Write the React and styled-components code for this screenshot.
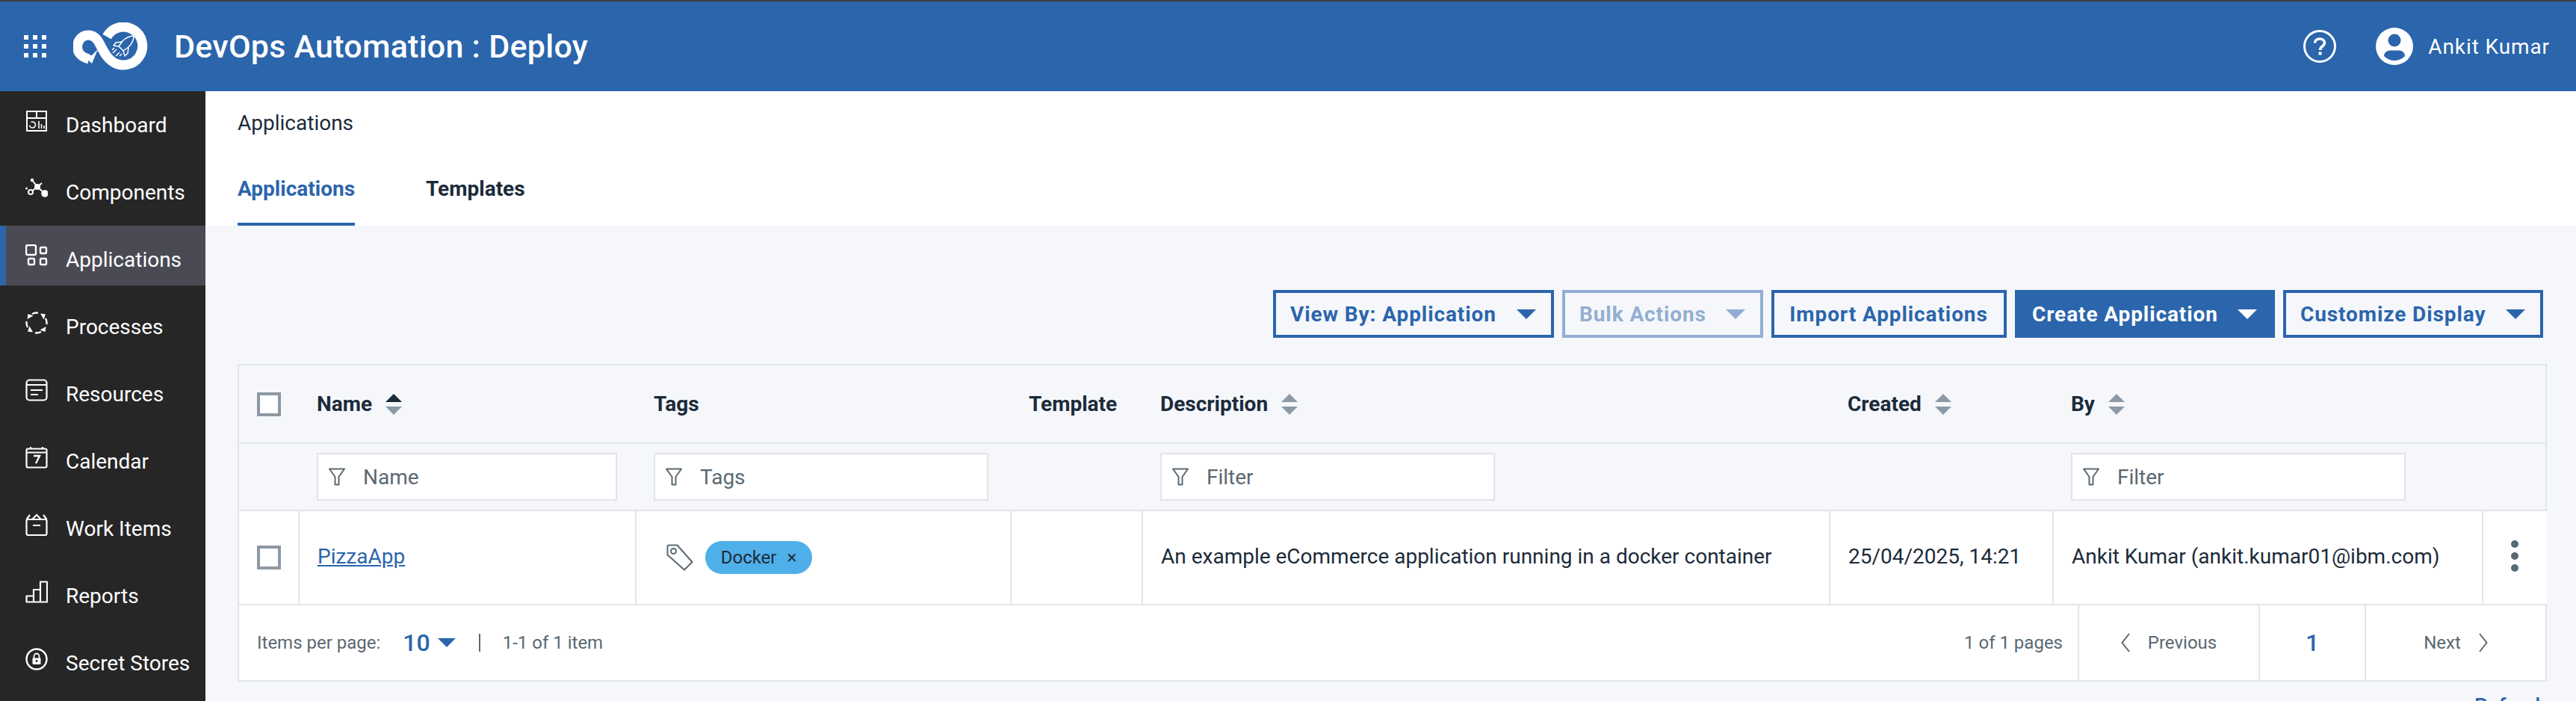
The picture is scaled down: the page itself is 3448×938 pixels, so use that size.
import React from 'react';
import styled, { createGlobalStyle } from 'styled-components';

const BLUE = '#2b65ac';
const LINE = '#e1e4ea';

const GlobalStyle = createGlobalStyle`
  html, body { margin: 0; padding: 0; height: 100%; overflow: hidden; }
  body { font-family: Roboto, "Liberation Sans", sans-serif; background: #f5f7fb; color: #1c2b3a; }
  * { box-sizing: border-box; }
`;

const Page = styled.div`
  height: 938px;
  overflow: hidden;
  display: flex;
  flex-direction: column;
  border-top: 2px solid #3f3f3f;
`;

const Header = styled.header`
  height: 120px;
  flex: none;
  background: ${BLUE};
  color: #fff;
  display: flex;
  align-items: center;
  padding: 0 35px 0 32px;
`;

const Dots = styled.div`
  display: grid;
  grid-template-columns: repeat(3, 6px);
  grid-auto-rows: 6px;
  gap: 6px;
  margin-right: 36px;
  span { background: #fff; }
`;

const Title = styled.h1`
  margin: 0 0 0 35px;
  font-size: 43px;
  font-weight: 500;
  letter-spacing: 0.25px;
`;

const HeaderRight = styled.div`
  margin-left: auto;
  display: flex;
  align-items: center;
`;

const HeaderGap = styled.span`
  width: 52px;
`;

const UserName = styled.span`
  font-size: 28px;
  letter-spacing: 0.9px;
  margin-left: 20px;
`;

const Body = styled.div`
  flex: 1;
  display: flex;
  min-height: 0;
`;

const Sidebar = styled.nav`
  width: 275px;
  flex: none;
  background: #262626;
  display: flex;
  flex-direction: column;
  gap: 10px;
`;

const NavItem = styled.a`
  height: 80px;
  flex: none;
  display: flex;
  align-items: center;
  gap: 24px;
  padding: 10px 0 0 ${(p) => (p.$active ? '26px' : '34px')};
  color: #fff;
  font-size: 28px;
  background: ${(p) => (p.$active ? '#4a4a55' : 'transparent')};
  border-left: ${(p) => (p.$active ? `8px solid ${BLUE}` : 'none')};
  svg { margin-top: -10px; flex: none; }
`;

const Main = styled.main`
  flex: 1;
  min-width: 0;
  display: flex;
  flex-direction: column;
`;

const TopPanel = styled.div`
  background: #fff;
  height: 180px;
  flex: none;
  padding: 26px 0 0 43px;
`;

const Breadcrumb = styled.div`
  font-size: 28px;
  line-height: 34px;
  color: #1c2b3a;
`;

const Tabs = styled.div`
  display: flex;
  gap: 95px;
  margin-top: 36px;
`;

const Tab = styled.div`
  font-size: 28px;
  font-weight: 700;
  height: 84px;
  padding-top: 18px;
  color: ${(p) => (p.$active ? BLUE : '#1c2b3a')};
  border-bottom: 4px solid ${(p) => (p.$active ? BLUE : 'transparent')};
`;

const Content = styled.div`
  padding: 86px 39px 0 43px;
`;

const Toolbar = styled.div`
  display: flex;
  justify-content: flex-end;
  gap: 11px;
  padding-right: 5px;
`;

const ActionButton = styled.button`
  height: 64px;
  width: ${(p) => p.$w}px;
  padding: 0 20px 0 19px;
  display: flex;
  align-items: center;
  justify-content: ${(p) => (p.$center ? 'center' : 'space-between')};
  font: 700 28px Roboto, sans-serif;
  letter-spacing: 0.9px;
  border: 4px solid ${(p) => (p.$disabled ? '#93aed2' : BLUE)};
  background: ${(p) => (p.$primary ? BLUE : 'transparent')};
  color: ${(p) => (p.$primary ? '#fff' : p.$disabled ? '#93aed2' : BLUE)};
  white-space: nowrap;
`;

const Caret = styled.i`
  display: block;
  width: 0;
  height: 0;
  border-left: ${(p) => p.$size || 13}px solid transparent;
  border-right: ${(p) => p.$size || 13}px solid transparent;
  border-top: ${(p) => p.$size || 13}px solid currentColor;
`;

const Card = styled.div`
  margin-top: 35px;
  border: 2px solid ${LINE};
`;

const Table = styled.table`
  width: 100%;
  table-layout: fixed;
  border-collapse: collapse;
`;

const HeadCell = styled.th`
  height: 104px;
  padding: 0 0 0 24px;
  text-align: left;
  font-size: 28px;
  font-weight: 700;
  color: #1c2b3a;
  border-bottom: 2px solid ${LINE};
`;

const HeadLabel = styled.div`
  display: flex;
  align-items: center;
  gap: 18px;
`;

const FilterCell = styled.td`
  height: 90px;
  padding: 0 0 0 24px;
  border-bottom: 2px solid ${LINE};
`;

const FilterBox = styled.div`
  width: ${(p) => p.$w}px;
  height: 64px;
  background: #fff;
  border: 2px solid ${LINE};
  display: flex;
  align-items: center;
  gap: 24px;
  padding-left: 14px;
  font-size: 28px;
  color: #5a6872;
`;

const DataCell = styled.td`
  height: 126px;
  padding: 0 0 ${(p) => (p.$flat ? 0 : 4)}px ${(p) => (p.$bare ? 0 : 24)}px;
  background: #fff;
  font-size: 28px;
  color: #1c2b3a;
  white-space: nowrap;
  border-left: ${(p) => (p.$first ? 'none' : `2px solid ${LINE}`)};
  border-bottom: 2px solid ${LINE};
`;

const NameLink = styled.a`
  color: ${BLUE};
  text-decoration: underline;
`;

const Checkbox = styled.span`
  display: block;
  width: 32px;
  height: 32px;
  background: #fff;
  border: 4px solid #8d98a3;
`;

const TagRow = styled.div`
  display: flex;
  align-items: center;
  gap: 16px;
  padding-left: 16px;
`;

const Chip = styled.span`
  height: 44px;
  width: 143px;
  border-radius: 22px;
  background: #4fafe9;
  font-size: 24px;
  display: flex;
  align-items: center;
  justify-content: center;
  gap: 14px;
  color: #1c2b3a;
`;

const Kebab = styled.div`
  display: flex;
  flex-direction: column;
  align-items: center;
  gap: 6px;
  padding-right: 2px;
  span { width: 10px; height: 10px; border-radius: 50%; background: #5a6872; }
`;

const Pagination = styled.div`
  height: 100px;
  background: #fff;
  display: flex;
  align-items: stretch;
  font-size: 24px;
  color: #5a6872;
`;

const PagerLeft = styled.div`
  display: flex;
  align-items: center;
  padding-left: 24px;
`;

const PerPage = styled.span`
  display: flex;
  align-items: center;
  gap: 10px;
  margin-left: 30px;
  color: ${BLUE};
  font-size: 32px;
  font-weight: 500;
  padding-right: 31px;
`;

const Divider = styled.i`
  width: 2px;
  height: 24px;
  background: #5a6872;
  margin-right: 30px;
`;

const PageCount = styled.div`
  margin-left: auto;
  display: flex;
  align-items: center;
  padding-right: 20px;
`;

const PagerCell = styled.div`
  width: ${(p) => p.$w}px;
  display: flex;
  align-items: center;
  justify-content: center;
  gap: 24px;
  border-left: 2px solid ${LINE};
  color: ${(p) => (p.$current ? BLUE : '#5a6872')};
  font-size: ${(p) => (p.$current ? '32px' : '24px')};
  font-weight: ${(p) => (p.$current ? 500 : 400)};
`;

const Refresh = styled.div`
  margin-top: 16px;
  text-align: right;
  font-size: 28px;
  color: ${BLUE};
  font-weight: 500;
`;

const Logo = () => (
  <svg width="100" height="64" viewBox="0 0 100 64" fill="none">
    <path d="M45 19A25.5 25.5 0 1 1 52 52C44 47 40 37 35 28C31 20 26 17 20 17C11 17 5.5 25 5.5 33C5.5 41 12 47 21 49" stroke="#fff" strokeWidth="13" />
    <path d="M13 43L25 55L33 36L25 44Z" fill="#fff" />
    <g stroke="#fff" strokeWidth="1.5" strokeLinejoin="round">
      <path d="M81 18C75 18 70 21 66 25L61 32L67 38L74 33C78 29 81 24 81 18Z" />
      <path d="M65 26L57 27L54 31L61 32M74 33L73 41L69 45L67 38" />
      <path d="M58 36L53 41M62 40L57 45M55 34L52 37M65 42L62 45" />
    </g>
  </svg>
);

const HelpIcon = () => (
  <svg width="46" height="46" viewBox="0 0 46 46" fill="none">
    <circle cx="23" cy="23" r="20.5" stroke="#fff" strokeWidth="3" />
    <path d="M16.5 18.5C16.5 15 19.5 13 23 13C26.5 13 29.5 15 29.5 18.5C29.5 23 23.5 22.5 23.5 28" stroke="#fff" strokeWidth="3.6" />
    <rect x="21.5" y="30.5" width="4" height="4" fill="#fff" />
  </svg>
);

const UserIcon = () => (
  <svg width="50" height="50" viewBox="0 0 50 50">
    <circle cx="25" cy="25" r="25" fill="#fff" />
    <circle cx="25" cy="17" r="8.5" fill={BLUE} />
    <path d="M11 38C11 33.5 15 30.5 19 30.5H31C35 30.5 39 33.5 39 38C35 42 30 44 25 44C20 44 15 42 11 38Z" fill={BLUE} />
  </svg>
);

const NavSvg = ({ children }) => (
  <svg width="30" height="30" viewBox="0 0 30 30" fill="none" stroke="#fff" strokeWidth="2">
    {children}
  </svg>
);

const navIcons = {
  Dashboard: (
    <NavSvg>
      <rect x="2" y="2" width="26" height="26" />
      <path d="M2 11H28M15 2V11" />
      <path d="M7.5 16.5A4 4 0 1 1 5.5 20.5" strokeWidth="1.6" />
      <path d="M18 15V25M21.5 19V25M25 21V25" strokeWidth="1.6" />
    </NavSvg>
  ),
  Components: (
    <NavSvg>
      <path d="M7 20L16 13L26 22M9 4L16 13L22 8" />
      <circle cx="16" cy="13" r="3" fill="#fff" />
      <circle cx="7" cy="20" r="3" fill="#262626" />
      <circle cx="26" cy="22" r="3.8" fill="#fff" />
      <circle cx="9" cy="4" r="2.2" fill="#fff" stroke="none" />
      <circle cx="1.5" cy="15" r="1.5" fill="#fff" stroke="none" />
    </NavSvg>
  ),
  Applications: (
    <NavSvg>
      <rect x="1" y="1" width="13" height="13" rx="2" strokeWidth="2.4" />
      <rect x="20" y="4" width="8" height="8" rx="1.5" strokeWidth="2.4" />
      <rect x="4" y="19" width="8" height="8" rx="1.5" strokeWidth="2.4" />
      <rect x="20" y="19" width="8" height="8" rx="1.5" strokeWidth="2.4" />
    </NavSvg>
  ),
  Processes: (
    <NavSvg>
      {[0, 90, 180, 270].map((deg) => (
        <g key={deg} transform={`rotate(${deg} 15 15)`}>
          <path d="M17 1.6A13.5 13.5 0 0 0 9 3" strokeWidth="2.4" />
          <path d="M2.5 10L3.5 3L10.5 5.5Z" fill="#fff" stroke="none" />
        </g>
      ))}
    </NavSvg>
  ),
  Resources: (
    <NavSvg>
      <rect x="1.5" y="1.5" width="27" height="27" rx="4" strokeWidth="2.2" />
      <path d="M1.5 8H28.5M7 15H23M7 21H17" strokeWidth="2.2" />
    </NavSvg>
  ),
  Calendar: (
    <NavSvg>
      <rect x="1.5" y="3.5" width="27" height="25" rx="2" strokeWidth="2.2" />
      <path d="M1.5 8.5H28.5M7 1V4M23 1V4" strokeWidth="2.2" />
      <path d="M11 13H19L14 23" strokeWidth="2.4" />
    </NavSvg>
  ),
  'Work Items': (
    <NavSvg>
      <rect x="1.5" y="8" width="27" height="21" rx="2" strokeWidth="2.2" />
      <path d="M1.5 8L6 2M28.5 8L24 2M9 8L15 2L21 8M10 16H20" strokeWidth="2.2" />
    </NavSvg>
  ),
  Reports: (
    <NavSvg>
      <path d="M1.5 28.5V20.5H11V28.5ZM11 28.5V12H20V28.5ZM20 28.5V1.5H29V28.5H1.5" strokeWidth="2.2" strokeLinejoin="round" />
    </NavSvg>
  ),
  'Secret Stores': (
    <NavSvg>
      <circle cx="15" cy="15" r="13.5" strokeWidth="2.4" />
      <rect x="9.5" y="13.5" width="11" height="8.5" fill="#fff" stroke="none" rx="1" />
      <path d="M11.5 14V11A3.5 3.5 0 0 1 18.5 11V14" strokeWidth="1.8" />
      <circle cx="15" cy="17.5" r="1.4" fill="#262626" stroke="none" />
    </NavSvg>
  ),
};

const FunnelIcon = () => (
  <svg width="22" height="24" viewBox="0 0 22 24" fill="none" stroke="#5a6872" strokeWidth="2" strokeLinejoin="round">
    <path d="M1 1.5H21L13.5 12V22.5H8.5V12Z" />
  </svg>
);

const TagIcon = () => (
  <svg width="36" height="36" viewBox="0 0 36 36" fill="none" stroke="#5a6872" strokeWidth="2" strokeLinejoin="round">
    <path d="M1.5 3C1.5 2 2.5 1.5 3.5 1.5H14.5L34.5 24L24 34.5L1.5 14.5Z" />
    <circle cx="9.5" cy="9.5" r="3.5" />
  </svg>
);

const Chevron = ({ dir }) => (
  <svg width="12" height="26" viewBox="0 0 12 26" fill="none" stroke="#5a6872" strokeWidth="2">
    <path d={dir === 'left' ? 'M11 1L1.5 13L11 25' : 'M1 1L10.5 13L1 25'} />
  </svg>
);

const SortIcon = ({ up }) => (
  <svg width="22" height="30" viewBox="0 0 22 30">
    <path d="M11 1L22 12H0Z" fill={up ? '#1c2b3a' : '#8d9aa6'} />
    <path d="M11 29L22 18H0Z" fill="#8d9aa6" />
  </svg>
);

const navLabels = ['Dashboard', 'Components', 'Applications', 'Processes', 'Resources', 'Calendar', 'Work Items', 'Reports', 'Secret Stores'];
const buttons = [
  { label: 'View By: Application', caret: true, width: 376 },
  { label: 'Bulk Actions', caret: true, disabled: true, width: 269 },
  { label: 'Import Applications', width: 315 },
  { label: 'Create Application', caret: true, primary: true, width: 348 },
  { label: 'Customize Display', caret: true, width: 348 },
];

export default function App() {
  return (
    <>
      <GlobalStyle />
      <Page>
        <Header>
          <Dots>{Array.from({ length: 9 }).map((_, i) => <span key={i} />)}</Dots>
          <Logo />
          <Title>DevOps Automation : Deploy</Title>
          <HeaderRight>
            <HelpIcon />
            <HeaderGap />
            <UserIcon />
            <UserName>Ankit Kumar</UserName>
          </HeaderRight>
        </Header>
        <Body>
          <Sidebar>
            {navLabels.map((label) => (
              <NavItem key={label} $active={label === 'Applications'}>
                {navIcons[label]}
                {label}
              </NavItem>
            ))}
          </Sidebar>
          <Main>
            <TopPanel>
              <Breadcrumb>Applications</Breadcrumb>
              <Tabs>
                <Tab $active>Applications</Tab>
                <Tab>Templates</Tab>
              </Tabs>
            </TopPanel>
            <Content>
              <Toolbar>
                {buttons.map((b) => (
                  <ActionButton key={b.label} $w={b.width} $center={!b.caret} $primary={b.primary} $disabled={b.disabled}>
                    {b.label}
                    {b.caret && <Caret />}
                  </ActionButton>
                ))}
              </Toolbar>
              <Card>
                <Table>
                  <colgroup>
                    {[80, 451, 502, 176, 920, 299, 575, 86].map((w, i) => <col key={i} width={w} />)}
                  </colgroup>
                  <thead>
                    <tr>
                      <HeadCell><Checkbox /></HeadCell>
                      <HeadCell><HeadLabel>Name <SortIcon up /></HeadLabel></HeadCell>
                      <HeadCell>Tags</HeadCell>
                      <HeadCell>Template</HeadCell>
                      <HeadCell><HeadLabel>Description <SortIcon /></HeadLabel></HeadCell>
                      <HeadCell><HeadLabel>Created <SortIcon /></HeadLabel></HeadCell>
                      <HeadCell><HeadLabel>By <SortIcon /></HeadLabel></HeadCell>
                      <HeadCell />
                    </tr>
                    <tr>
                      <FilterCell />
                      <FilterCell><FilterBox $w={402}><FunnelIcon />Name</FilterBox></FilterCell>
                      <FilterCell><FilterBox $w={448}><FunnelIcon />Tags</FilterBox></FilterCell>
                      <FilterCell />
                      <FilterCell><FilterBox $w={448}><FunnelIcon />Filter</FilterBox></FilterCell>
                      <FilterCell />
                      <FilterCell><FilterBox $w={448}><FunnelIcon />Filter</FilterBox></FilterCell>
                      <FilterCell />
                    </tr>
                  </thead>
                  <tbody>
                    <tr>
                      <DataCell $first $flat><Checkbox /></DataCell>
                      <DataCell><NameLink>PizzaApp</NameLink></DataCell>
                      <DataCell $flat>
                        <TagRow><TagIcon /><Chip>Docker <span>×</span></Chip></TagRow>
                      </DataCell>
                      <DataCell />
                      <DataCell>An example eCommerce application running in a docker container</DataCell>
                      <DataCell>25/04/2025, 14:21</DataCell>
                      <DataCell>Ankit Kumar (ankit.kumar01@ibm.com)</DataCell>
                      <DataCell $bare><Kebab><span /><span /><span /></Kebab></DataCell>
                    </tr>
                  </tbody>
                </Table>
                <Pagination>
                  <PagerLeft>
                    Items per page:
                    <PerPage>10 <Caret $size={12} /></PerPage>
                    <Divider />
                    1-1 of 1 item
                  </PagerLeft>
                  <PageCount>1 of 1 pages</PageCount>
                  <PagerCell $w={242}><Chevron dir="left" />Previous</PagerCell>
                  <PagerCell $w={142} $current>1</PagerCell>
                  <PagerCell $w={242}>Next<Chevron dir="right" /></PagerCell>
                </Pagination>
              </Card>
              <Refresh>Refresh</Refresh>
            </Content>
          </Main>
        </Body>
      </Page>
    </>
  );
}
